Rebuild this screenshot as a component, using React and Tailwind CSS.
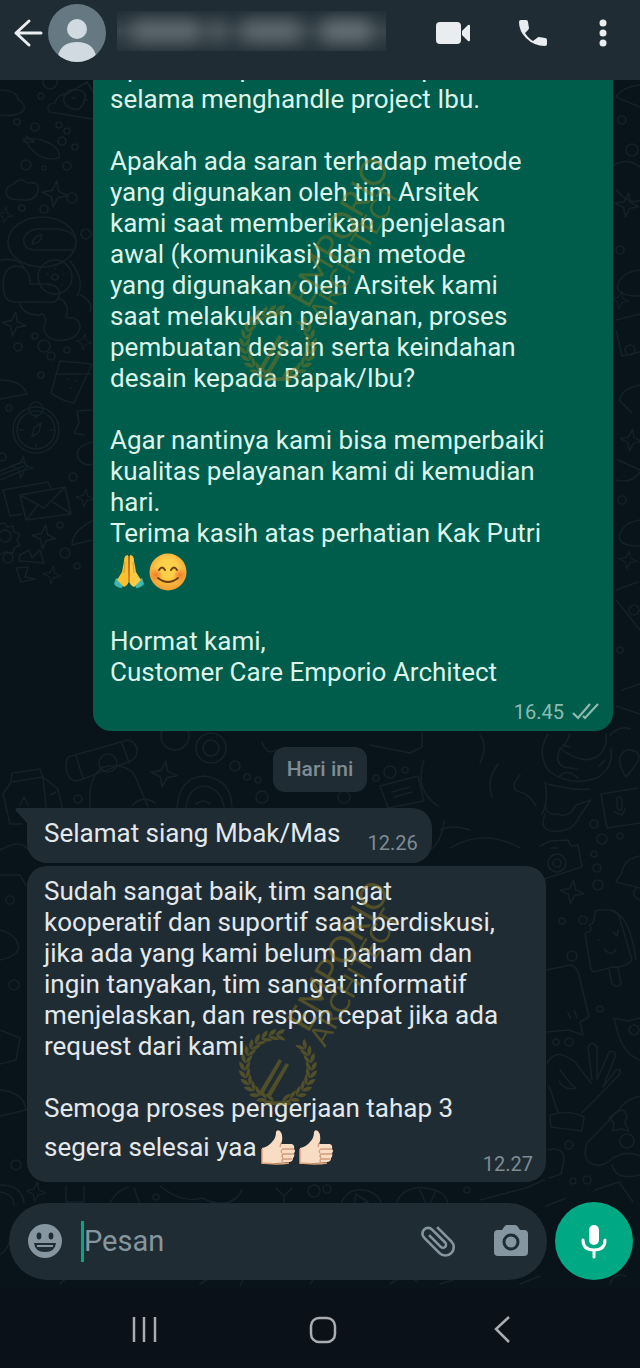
const GREETING = `Apakah respon tim Arsitek positif
selama menghandle project Ibu.

Apakah ada saran terhadap metode
yang digunakan oleh tim Arsitek
kami saat memberikan penjelasan
awal (komunikasi) dan metode
yang digunakan oleh Arsitek kami
saat melakukan pelayanan, proses
pembuatan desain serta keindahan
desain kepada Bapak/Ibu?

Agar nantinya kami bisa memperbaiki
kualitas pelayanan kami di kemudian
hari.
Terima kasih atas perhatian Kak Putri`;

const REPLY = `Sudah sangat baik, tim sangat
kooperatif dan suportif saat berdiskusi,
jika ada yang kami belum paham dan
ingin tanyakan, tim sangat informatif
menjelaskan, dan respon cepat jika ada
request dari kami

Semoga proses pengerjaan tahap 3`;

const STARS = [
  [55, 194, 13], [14, 324, 12], [44, 537, 12], [52, 575, 9], [164, 774, 13],
  [22, 467, 11], [572, 892, 12], [627, 205, 12], [631, 440, 11], [5, 215, 8],
  [85, 498, 9], [36, 1192, 10], [628, 560, 9], [84, 342, 8], [620, 300, 9],
];

const DOTS = [
  [50, 82, 7], [41, 96, 3], [35, 127, 4], [17, 122, 3], [59, 125, 3], [67, 131, 3],
  [62, 141, 4], [26, 165, 5], [44, 168, 2], [67, 166, 4], [75, 147, 3], [72, 198, 5],
  [44, 209, 4], [22, 208, 3], [86, 234, 5], [35, 336, 3], [44, 346, 6], [18, 347, 4],
  [67, 350, 3], [51, 356, 4], [41, 375, 3], [9, 408, 3], [73, 477, 4], [2, 457, 4],
  [60, 525, 3], [65, 553, 5], [8, 558, 5], [77, 566, 3], [78, 799, 4], [235, 766, 5],
  [247, 777, 3], [258, 780, 3], [262, 797, 6], [376, 778, 3], [390, 772, 6],
  [405, 770, 3], [344, 797, 6], [594, 824, 4], [602, 839, 5], [620, 836, 3],
  [594, 854, 3], [597, 868, 4], [598, 885, 5], [562, 921, 3], [583, 920, 4],
  [572, 956, 5], [600, 1009, 3], [556, 1042, 3], [569, 1042, 4], [569, 1145, 4],
  [587, 1180, 4], [573, 1181, 3], [314, 1191, 6], [327, 1189, 4], [156, 1197, 3],
  [467, 1190, 3], [622, 120, 4], [632, 150, 6], [620, 250, 4], [630, 350, 5],
  [622, 500, 4], [634, 610, 5], [620, 650, 3], [16, 1165, 5], [10, 900, 4], [14, 985, 5],
];

function Doodles() {
  return (
    <svg
      className="absolute inset-0 h-full w-full"
      viewBox="0 80 640 1208"
      preserveAspectRatio="xMidYMax slice"
      fill="none"
      stroke="#142128"
      strokeWidth="1.6"
      strokeLinecap="round"
      strokeLinejoin="round"
      aria-hidden="true"
    >
      {STARS.map(([x, y, r]) => (
        <path
          key={`${x}-${y}`}
          transform={`translate(${x} ${y}) scale(${r / 12}) rotate(8)`}
          d="M0-12 3-3 12 0 3 3 0 12-3 3-12 0-3-3Z"
        />
      ))}
      {DOTS.map(([x, y, r]) => (
        <circle key={`${x}-${y}`} cx={x} cy={y} r={r} />
      ))}

      {/* cloud, party hat, carrot, bush */}
      <path d="M0 90q16 0 18 9 10 7 4 13-9 5-22 3" />
      <path d="M50 112q-6-8 5-9 2-9 12-9l20-12 6 10M50 112l42 7M66 93q-6 10 4 15t14-6q4-10-5-12t-13 3M72 98h3M84 100h4" />
      <path d="M23 139q14-2 28 5 10 6 8 14-10 3-21-3-8-6-11-12zM26 136l8 6M24 142h9" />
      <path d="M7 196q-3-10 7-12 6-8 13-1 13-2 11 8-2 10-16 9-12 0-15-4z" />

      {/* helmet, arm and flower */}
      <ellipse cx="42" cy="242" rx="34" ry="25" />
      <path d="M75 250H35q-13-1-11-12 4-10 18-9 28-2 33 9M32 244q2-9 10-9-1 9-10 9zM0 260q20-3 24 8M4 276q4-13 18-9 8 4 8 17h20q11 3 9 12-2 8-12 6H15Q0 302 4 276zM20 303q2 12 20 12 4-3 6 5-7 16 10 20 20 2 24-12 0-12-14-10 5-15-8-20" />
      <circle cx="55" cy="277" r="17" />
      <circle cx="55" cy="277" r="3" />
      <path d="M55 268v1M63 274h1M47 274h1M49 285h1M61 285h1M70 261q16 20 7 35M80 295q14 7 10 16" />

      {/* card, bowl, compass */}
      <path d="M60 361l32 3-18 39q-12-2-23-10zM57 374h34M67 379h1M76 381h1M70 388h1M0 380q22 0 27 14L0 399" />
      <circle cx="36" cy="430" r="23" />
      <circle cx="36" cy="430" r="19" />
      <circle cx="36" cy="409" r="7" />
      <path d="M32 437l2-9 7-5-2 9zM36 414v4M36 444v3M19 430h4M50 430h3" />
      <path d="M92 410l-15 1 2 12-5 10 10 2M92 442q-18 5-14 16 6 9 14 6" />

      {/* pencil, envelopes, gear */}
      <path d="M0 471l22-9q7 2 4 7L0 480M0 475l24-9" />
      <path d="M3 490l45-8 3 6M3 490l7 26 12-2M20 495l45-8 6 27-45 6zM20 495l24 13 21-21M27 519l11-14M70 513l-17-11" />
      <path d="M0 524l5-1 2 4 6-1 1 6 6 2-3 6 3 5-6 3-1 5-7-1-6 2" />
      <circle cx="5" cy="536" r="6" />
      <path d="M92 521q-20 10-20 24l20-5M20 555l9-5 3 8 8-8 4 13-10-1-15-1zM16 568l12-1-3 10 10 2-14 3z" />

      {/* milk carton, film roll, bell, donut */}
      <path d="M12 773l28-4 3 8-32 5zM11 782L3 794l7 30h12M43 777l15 12 4 18M11 782l32-5 3 30M20 805l4-8 4 8M50 795l6-3" />
      <path d="M68 757l60-17q10 3 9 12-1 8-9 10l-48 18q-8 3-12-5-4-10 0-18zM76 756l7 22M122 743l7 20" />
      <circle cx="108" cy="763" r="9" />
      <path d="M90 807q-2-38 18-41 22-2 28 12l12 29M132 806q10-12 23-3" />
      <path d="M177 807q3-30 27-31 27 3 28 31M186 807q3-20 18-21 17 2 20 21M196 804q8-6 14 0" />
      <circle cx="175" cy="736" r="14" />
      <circle cx="211" cy="748" r="15" />
      <circle cx="211" cy="748" r="8" />
      <path d="M262 742q5 14 14 8M370 745l40 8 12-6V733M424 760q-10 30 14 46M380 786l38-10 6 25-36 7zM392 792l18-5M394 797l18-5M430 850q12-8 14-30" />

      {/* cat and snake on the right */}
      <path d="M548 734q-12 20 1 37 20 16 48 7 17-10 14-30M570 734q-4 10-10 15-6 12 3 18l14 2M560 748q22 18 38 8 10-8 8-22M563 745l7 2M605 760l-6 6M560 776q6-8 18 2" />
      <path d="M545 782q4 20-3 32M548 784q26 7 42 5M545 814q-6 14 6 17 22 2 28-14l12-17-15 5q-7 14-18 9-12 2-13-10M610 735q10-10 20-6M620 757q4-10 14-6t0 16l-8 10q-8-12-6-20z" />
      <path d="M601 794l37-6M601 794l6 34 33-5M617 798q4-4 5 3v8q-4 3-5-3zM614 812l8 3 3-6M498 764q-12 16-6 33M520 775q-12 14 0 17 10 2 16 14M480 735q8 12 0 28" />

      {/* camera, ice cream, bell */}
      <path d="M540 846l10-5 18-1 3 6 7-1 4 22-38 12M550 848h8" />
      <circle cx="557" cy="863" r="9" />
      <circle cx="557" cy="863" r="4" />
      <path d="M640 856q-16 3-18 16l-6 10 24 6M636 888q-6 8 4 12" />
      <path d="M595 911q18-4 24 5l13 44q-6 8-20 7l-18 5q-4-2-4-8l-5-31q10-2 4-8 6 0 6-14zM612 910q18 6 24 50M598 940h1M613 932l4 4 1-6M604 949q8 9 12 0M609 970l3 14q6 5 9-1l-3-15" />

      {/* speech card, hand, controller */}
      <path d="M546 970l25-5q6 2 8 10l10 42-9 5 3 13-14-5-23 2M568 1012l2 6M574 1010l3 8" />
      <path d="M640 1018l-12 3-14-3 3 12q6 24 23 30" />
      <circle cx="634" cy="1030" r="5" />
      <path d="M547 1064q8-18 28-2l16 21M560 1070q12 16 16 18-12 3-17-7M592 1080l-4-33q4-7 9 0v33l12-28q7-3 6 5l-12 30 13-17q7-2 3 5l-37 38M549 1086l9 26M550 1115q18-6 34 2l-2 14-31-4z" />
      <path d="M640 1096q-16 4-20 13l-33 34q-6 18 8 22 10 1 18-7 14-8 27-2M616 1112l7-2 4 5-2 8 4 8-8-2-8 2 1-8-5-5z" />
      <circle cx="627" cy="1141" r="7" />
      <path d="M548 1150q16-4 16 10l-3 14-12 4M612 1165q4 16 28 10M595 1190l24-8 14 20M546 1206l20-8" />

      {/* strip below the messages */}
      <path d="M160 1186q22 18 42 12 28 14 40-8M66 1186v16h18v-16M106 1220q2-26 22-33M140 1204q-4-10-6-16M276 1188l8 8 8-8M284 1196v12M340 1206q6-18 24-16 17 3 18 18M356 1194l12 8-14 4zM396 1206q4-20 30-18 22 3 22 18M420 1190l6 14M436 1190l-6 14M480 1200l46-12 18-8" />
      <path d="M0 1185q22 0 24 18M0 1192q14 2 14 14M0 1255q8-6 10-14M60 1284q6-8 18-6l50-2M200 1284l12-8M240 1286l4-8M310 1284l6-8M390 1284q16-12 28-2M440 1284l20-6M520 1284l20-8M610 1284q4-12 16-8" />

      {/* right edge next to the first message */}
      <path d="M640 85q-18 2-24 12l24 10M614 165q14-8 26 2M616 190q14 16 24 10M640 270q-18 2-22 14t22 12M616 320l24-6M616 330l6 26 18-4M640 385q-20 4-20 16l12 12M618 460l22 10M616 480q16 4 24-8M640 520q-16 2-20 14t20 12M616 590l22-8M616 600l24 30M622 690l18-6M616 706l24 8" />
      <path d="M0 850q22-12 28 0M0 875h20l6 10M0 930q14 3 18 14t-18 16M0 1030l20 8-4 22-16 4M0 1090q24 2 26 20l-26 6M440 830q12-6 30 0M450 848q34-20 70 0" />
    </svg>
  );
}

// leaf positions around the laurel, in degrees; both sides grow up from the base
const RIGHT_LEAVES = [76, 63, 50, 37, 24, 11, -2, -15, -28, -41];
const LEFT_LEAVES = [104, 117, 130, 143, 156, 169, 182, 195, 208, 221, 234, 247, 260, 273];

function Watermark({ className }) {
  return (
    <svg
      className={`pointer-events-none absolute h-[250px] w-[200px] overflow-visible ${className}`}
      viewBox="0 0 200 250"
      fill="#8a7a1e"
      opacity="0.45"
      aria-hidden="true"
    >
      <g transform="translate(48 197)">
        {RIGHT_LEAVES.map((a) => (
          <path key={a} transform={`rotate(${a}) translate(33 0)`} d="M0 4q-6-3-5-10 5 3 5 10zM0 4q0-8 6-9 0 7-6 9z" />
        ))}
        {LEFT_LEAVES.map((a) => (
          <path key={a} transform={`rotate(${a}) translate(33 0)`} d="M0-4q-6 3-5 10 5-3 5-10zM0-4q0 8 6 9 0-7-6-9z" />
        ))}
        <path d="M-20 26 1-9l3 2-20 35zM-12 28 8-5l3 2-19 33zM-18 30q16 7 34 0l-8 7h-20z" />
      </g>
      <g className="font-['Lato']">
        <text transform="translate(78 163) rotate(-60)" fontSize="36">EMPORIO</text>
        <text transform="translate(95 177) rotate(-60)" fontSize="28">ARCHITECT</text>
      </g>
    </svg>
  );
}

function PrayEmoji() {
  return (
    <svg className="h-[38px] w-[38px]" viewBox="0 0 38 38" role="img" aria-label="🙏">
      <path d="M6 25l8 4-2 6q-5 0-8-4z" fill="#3fb8b5" />
      <path d="M32 25l-8 4 2 6q5 0 8-4z" fill="#3fb8b5" />
      <path d="M18 2q-4 0-4 6l-2 11-5 8 7 7q5-2 5-8z" fill="#fbc02d" />
      <path d="M20 2q4 0 4 6l2 11 5 8-7 7q-5-2-5-8z" fill="#fcca45" />
      <path d="M19 3v25" stroke="#d9731a" strokeWidth="1.6" />
      <path d="M15 9l-1 11M23 9l1 11" stroke="#e8952b" strokeWidth="1" fill="none" />
    </svg>
  );
}

function BlushEmoji() {
  return (
    <svg className="h-[38px] w-[38px]" viewBox="0 0 38 38" role="img" aria-label="😊">
      <defs>
        <radialGradient id="face" cx="50%" cy="40%" r="58%">
          <stop offset="0.4" stopColor="#fcd04a" />
          <stop offset="1" stopColor="#f2a033" />
        </radialGradient>
        <radialGradient id="cheek">
          <stop offset="0" stopColor="#f47b2b" />
          <stop offset="1" stopColor="#f47b2b" stopOpacity="0" />
        </radialGradient>
      </defs>
      <circle cx="19" cy="19" r="18.5" fill="url(#face)" />
      <circle cx="7" cy="22" r="7" fill="url(#cheek)" />
      <circle cx="31" cy="22" r="7" fill="url(#cheek)" />
      <g fill="none" stroke="#6b3f14" strokeWidth="2" strokeLinecap="round">
        <path d="M10 17q3-5 6 0M22 17q3-5 6 0" />
        <path d="M9 25q10 8 20 0" />
      </g>
    </svg>
  );
}

function ThumbEmoji() {
  return (
    <svg className="ml-1 h-9 w-[34px]" viewBox="0 0 34 36" role="img" aria-label="👍🏻">
      <path
        d="M1 19q6-1 10-6 4-4 4-10 1-3 4-1 3 3 2 10l-1 3h11q3 1 2 5 2 2 0 4 1 3-1 5 0 4-4 4-5 1-13 1L1 35z"
        fill="#f8dcc4"
      />
      <path d="M1 20v14l14 1q8 0 13-1" stroke="#e0a37c" strokeWidth="1.5" fill="none" />
      <path d="M33 20H22q-3 2-1 4M33 25H22q-2 2 0 4M31 30h-9q-2 1 0 4M20 14l-1 4" stroke="#d39b78" strokeWidth="1.3" fill="none" />
    </svg>
  );
}

function Header() {
  return (
    <header className="relative z-10 flex shrink-0 items-center bg-[#202c33] pt-[3px] pb-[17px] pl-3 text-[#e9edef]">
      <button type="button" aria-label="Kembali" className="w-9">
        <svg className="h-8 w-8" viewBox="0 0 32 32" fill="none" stroke="currentColor" strokeWidth="3" strokeLinecap="round" strokeLinejoin="round">
          <path d="M29 16H4M17 4 4 16l13 12" />
        </svg>
      </button>
      <svg className="h-[60px] w-[60px]" viewBox="0 0 60 60" role="img" aria-label="Foto profil">
        <clipPath id="avatar">
          <circle cx="29" cy="30" r="29" />
        </clipPath>
        <g clipPath="url(#avatar)">
          <path fill="#667983" d="M0 0h60v60H0z" />
          <circle cx="29" cy="26" r="10" fill="#d1d9e1" />
          <path d="M10 53q3-14 19-14t19 14v7H10z" fill="#d1d9e1" />
        </g>
      </svg>
      {/* contact name is hidden */}
      <div className="mt-2 ml-[9px] flex h-10 w-[269px] items-center gap-3 self-start overflow-hidden bg-linear-to-b from-[#232f36] via-[#39454c] to-[#27333a] pl-4">
        <div className="h-6 w-[66px] bg-[#7f888e] blur-sm opacity-50" />
        <div className="h-6 w-3 bg-[#7f888e] blur-sm opacity-40" />
        <div className="ml-2 h-6 w-14 bg-[#7f888e] blur-sm opacity-50" />
        <div className="mr-4 ml-3 h-6 flex-1 bg-[#7f888e] blur-sm opacity-60" />
      </div>
      <div className="flex flex-1 items-center justify-end gap-[38px] pr-[21px]">
        <button type="button" aria-label="Panggilan video">
          <svg className="h-9 w-9" viewBox="0 0 36 36" fill="currentColor">
            <rect x="1" y="7" width="25" height="22" rx="4" />
            <path d="M27 16l6-6q2-1 2 1v14q0 2-2 1l-6-6z" />
          </svg>
        </button>
        <button type="button" aria-label="Panggilan suara" className="pl-2">
          <svg className="h-8 w-8" viewBox="0 0 32 32" fill="currentColor">
            <path d="M4 3h5q2 0 2 2l1 6q0 1-1 2l-3 3q4 6 8 8l4-3q1-1 2-1l6 1q2 0 2 2v4q0 2-2 2-11 0-19-8-7-7-7-16 0-2 2-2z" />
          </svg>
        </button>
        <button type="button" aria-label="Menu lainnya">
          <svg className="h-8 w-8" viewBox="0 0 32 32" fill="currentColor">
            <circle cx="16" cy="6" r="3.5" />
            <circle cx="16" cy="16" r="3.5" />
            <circle cx="16" cy="26" r="3.5" />
          </svg>
        </button>
      </div>
    </header>
  );
}

function Composer() {
  return (
    <form className="mt-5 flex items-center gap-2 pr-[7px] pb-2 pl-[9px]" onSubmit={(e) => e.preventDefault()}>
      <div className="flex h-[77px] min-w-0 flex-1 items-center rounded-full bg-[#202c33] px-[18px] text-[#8696a0]">
        <button type="button" aria-label="Emoji">
          <svg className="h-9 w-9" viewBox="0 0 36 36" fill="currentColor">
            <circle cx="18" cy="18" r="17" />
            <g fill="#202c33">
              <ellipse cx="12" cy="13" rx="2.4" ry="3.4" />
              <ellipse cx="24" cy="13" rx="2.4" ry="3.4" />
              <path d="M7 20h22q-1 9-11 9T7 20z" />
            </g>
            <path d="M10 22h16v2H10z" />
          </svg>
        </button>
        <span className="ml-[18px] h-[41px] w-[3px] bg-[#00a884]" />
        <input
          type="text"
          aria-label="Pesan"
          placeholder="Pesan"
          className="min-w-0 flex-1 bg-transparent pt-[2px] text-[29px] text-[#d1d7db] outline-none placeholder:text-[#8696a0]"
        />
        <button type="button" aria-label="Lampirkan">
          <svg className="h-[42px] w-[42px]" viewBox="0 0 24 24" fill="currentColor">
            <path
              transform="rotate(-45 12 12)"
              d="M16.5 6v11.5a4 4 0 0 1-8 0V5a2.5 2.5 0 0 1 5 0v10.5a1 1 0 0 1-2 0V6H10v9.5a2.5 2.5 0 0 0 5 0V5a4 4 0 0 0-8 0v12.5a5.5 5.5 0 0 0 11 0V6z"
            />
          </svg>
        </button>
        <button type="button" aria-label="Kamera" className="ml-[34px]">
          <svg className="h-9 w-9" viewBox="0 0 36 36" fill="currentColor">
            <path d="M11 4q1-2 3-2h8q2 0 3 2l2 3h4q4 0 4 4v18q0 4-4 4H5q-4 0-4-4V11q0-4 4-4h4z" />
            <circle cx="18" cy="19" r="7" fill="none" stroke="#202c33" strokeWidth="3" />
          </svg>
        </button>
      </div>
      <button type="button" aria-label="Pesan suara" className="flex h-[78px] w-[78px] items-center justify-center rounded-full bg-[#00a884] text-white">
        <svg className="h-9 w-9" viewBox="0 0 36 36">
          <rect x="13" y="2" width="10" height="20" rx="5" fill="currentColor" />
          <path d="M7 17q0 10 11 10t11-10M18 27v7" fill="none" stroke="currentColor" strokeWidth="3" strokeLinecap="round" />
        </svg>
      </button>
    </form>
  );
}

function SystemNav() {
  return (
    <nav className="flex h-20 shrink-0 items-center justify-between bg-[#0b1118] pr-[118px] pl-[126px] text-[#a9adb1]">
      <button type="button" aria-label="Aplikasi terbaru">
        <svg className="h-9 w-9" viewBox="0 0 36 36" fill="none" stroke="currentColor" strokeWidth="2.5">
          <path d="M8 7v25M18 7v25M29 7v25" />
        </svg>
      </button>
      <button type="button" aria-label="Beranda">
        <svg className="h-9 w-9" viewBox="0 0 36 36" fill="none" stroke="currentColor" strokeWidth="2.5">
          <rect x="5" y="8" width="24" height="24" rx="8" />
        </svg>
      </button>
      <button type="button" aria-label="Kembali">
        <svg className="h-9 w-9" viewBox="0 0 36 36" fill="none" stroke="currentColor" strokeWidth="2.5">
          <path d="M23 7 10 19l13 13" />
        </svg>
      </button>
    </nav>
  );
}

export default function App() {
  return (
    <div className="flex h-screen flex-col bg-[#08131a] font-['Roboto',sans-serif]">
      <Header />
      <main className="relative min-h-0 flex-1 overflow-hidden">
        <Doodles />
        <div className="relative flex h-full flex-col justify-end">
          <article className="relative mr-[27px] ml-[93px] shrink-0 rounded-[18px] bg-[#005c4b] px-[17px] pb-[7px] text-[26px] leading-[31px] text-[#dcf3ea]">
            <p className="whitespace-pre-line">{GREETING}</p>
            <p className="flex h-[46px] items-center gap-px">
              <PrayEmoji />
              <BlushEmoji />
            </p>
            <p className="mt-[31px]">Hormat kami,</p>
            <p>Customer Care Emporio Architect</p>
            <p className="mt-3 flex items-center justify-end gap-2 text-[20px] leading-6 text-[#8cbcb0]">
              <time>16.45</time>
              <svg className="-mr-1 h-5 w-7" viewBox="0 0 28 20" fill="none" stroke="currentColor" strokeWidth="2.2" role="img" aria-label="Terkirim">
                <path d="M1 11l5 5L18 2M11 14l2 2L26 2" />
              </svg>
            </p>
            <Watermark className="bottom-[334px] left-[137px]" />
          </article>

          <p className="mt-4 self-center rounded-xl bg-[#202c33] px-[14px] py-[10px] text-[21px] leading-[25px] font-medium text-[#7f8d95]">
            Hari ini
          </p>

          <article className="relative mt-4 ml-[27px] flex items-end gap-[27px] self-start rounded-[20px] rounded-tl-none bg-[#202c33] pt-[10px] pr-[14px] pb-2 pl-[17px] text-[#e3e8eb]">
            <svg className="absolute top-0 -left-[12px] h-4 w-[13px] text-[#202c33]" viewBox="0 0 13 16" fill="currentColor" aria-hidden="true">
              <path d="M13 0H2Q0 0 1 3l12 13z" />
            </svg>
            <p className="pb-[6px] text-[26px] leading-[31px]">Selamat siang Mbak/Mas</p>
            <time className="text-[20px] leading-6 text-[#7f8b92]">12.26</time>
          </article>

          <article className="relative mt-[3px] mr-[94px] ml-[27px] rounded-[20px] bg-[#202c33] pt-[10px] pr-[13px] pb-[6px] pl-[17px] text-[26px] leading-[31px] text-[#e3e8eb]">
            <p className="whitespace-pre-line">{REPLY}</p>
            <div className="flex items-end justify-between">
              <p className="mb-[6px] flex h-[46px] items-center">
                segera selesai yaa
                <ThumbEmoji />
                <ThumbEmoji />
              </p>
              <time className="text-[20px] leading-6 text-[#7f8b92]">12.27</time>
            </div>
            <Watermark className="bottom-[61px] left-[203px]" />
          </article>

          <Composer />
        </div>
      </main>
      <SystemNav />
    </div>
  );
}
